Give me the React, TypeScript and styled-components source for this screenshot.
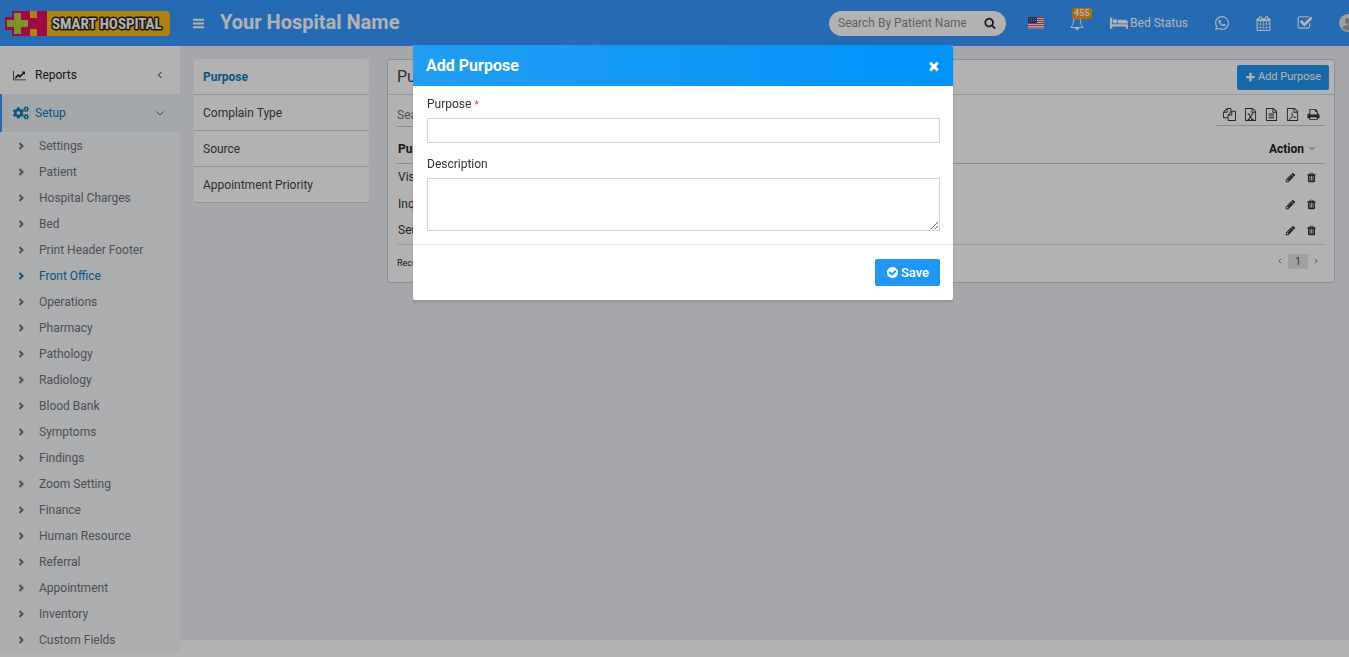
import React from "react";
import styled, { createGlobalStyle } from "styled-components";
import { FaCogs, FaWhatsapp } from "react-icons/fa";

const Global = createGlobalStyle`
  * { box-sizing: border-box; }
  body {
    margin: 0;
    background: #fff;
    color: #333;
    font-family: Roboto, "Liberation Sans", sans-serif;
    font-size: 12px;
    line-height: 18px;
  }
  a { color: inherit; text-decoration: none; }
  button, input, textarea { font: inherit; }
  ul { list-style: none; margin: 0; padding: 0; }
`;

const paths = {
  bars: "M1664 1344v128q0 26-19 45t-45 19h-1408q-26 0-45-19t-19-45v-128q0-26 19-45t45-19h1408q26 0 45 19t19 45zm0-512v128q0 26-19 45t-45 19h-1408q-26 0-45-19t-19-45v-128q0-26 19-45t45-19h1408q26 0 45 19t19 45zm0-512v128q0 26-19 45t-45 19h-1408q-26 0-45-19t-19-45v-128q0-26 19-45t45-19h1408q26 0 45 19t19 45z",
  search: "M1216 832q0-185-131.500-316.500t-316.500-131.500-316.500 131.500-131.500 316.500 131.500 316.500 316.500 131.500 316.500-131.500 131.500-316.500zm512 832q0 52-38 90t-90 38q-54 0-90-38l-343-342q-179 124-399 124-143 0-273.500-55.500t-225-150-150-225-55.500-273.500 55.500-273.500 150-225 225-150 273.500-55.500 273.500 55.500 225 150 150 225 55.500 273.500q0 220-124 399l343 343q37 37 37 90z",
  bell: "M912 1696q0-16-16-16-59 0-101.500-42.500t-42.500-101.500q0-16-16-16t-16 16q0 73 51.500 124.500t124.500 51.500q16 0 16-16zm-666-288h1300q-266-300-266-832 0-51-24-105t-69-103-121.500-80.500-169.500-31.500-169.500 31.500-121.500 80.500-69 103-24 105q0 532-266 832zm1482 0q0 52-38 90t-90 38h-448q0 106-75 181t-181 75-181-75-75-181h-448q-52 0-90-38t-38-90q50-42 91-88t85-119.500 74.500-158.500 50-206 19.500-260q0-152 117-282.500t307-158.500q-8-19-8-39 0-40 28-68t68-28 68 28 28 68q0 20-8 39 190 28 307 158.500t117 282.500q0 139 19.500 260t50 206 74.500 158.500 85 119.500 91 88z",
  trash: "M704 1376v-704q0-14-9-23t-23-9h-64q-14 0-23 9t-9 23v704q0 14 9 23t23 9h64q14 0 23-9t9-23zm256 0v-704q0-14-9-23t-23-9h-64q-14 0-23 9t-9 23v704q0 14 9 23t23 9h64q14 0 23-9t9-23zm256 0v-704q0-14-9-23t-23-9h-64q-14 0-23 9t-9 23v704q0 14 9 23t23 9h64q14 0 23-9t9-23zm-544-992h448l-48-117q-7-9-17-11h-317q-10 2-17 11zm928 32v64q0 14-9 23t-23 9h-96v948q0 83-47 143.500t-113 60.500h-832q-66 0-113-58.500t-47-141.500v-952h-96q-14 0-23-9t-9-23v-64q0-14 9-23t23-9h309l70-167q15-37 54-63t79-26h320q40 0 79 26t54 63l70 167h309q14 0 23 9t9 23z",
  pencil: "M491 1536l91-91-235-235-91 91v107h128v128h107zm523-928q0-22-22-22-10 0-17 7l-542 542q-7 7-7 17 0 22 22 22 10 0 17-7l542-542q7-7 7-17zm-54-192l416 416-832 832h-416v-416zm683 96q0 53-37 90l-166 166-416-416 166-165q36-38 90-38 53 0 91 38l235 234q37 39 37 91z",
  copy: "M1696 384q40 0 68 28t28 68v1216q0 40-28 68t-68 28h-960q-40 0-68-28t-28-68v-288h-544q-40 0-68-28t-28-68v-672q0-40 20-88t48-76l408-408q28-28 76-48t88-20h416q40 0 68 28t28 68v328q68-40 128-40h416zm-544 213l-299 299h299v-299zm-640-384l-299 299h299v-299zm196 647l316-316v-416h-384v416q0 40-28 68t-68 28h-416v640h512v-256q0-40 20-88t48-76zm956 804v-1152h-384v416q0 40-28 68t-68 28h-416v640h896z",
  file: "M1596 380q28 28 48 76t20 88v1152q0 40-28 68t-68 28h-1344q-40 0-68-28t-28-68v-1600q0-40 28-68t68-28h896q40 0 88 20t76 48zm-444-244v376h376q-10-29-22-41l-313-313q-12-12-41-22zm384 1528v-1024h-416q-40 0-68-28t-28-68v-416h-768v1536h1280z",
  lines: "M512 768h736v128h-736zM512 1024h736v128h-736zM512 1280h736v128h-736z",
  sheet: "M480 768h320v100h-70l170 250 170-250h-70v-100h300v100h-80l-250 340 260 350h90v100h-350v-100h80l-160-230-160 230h70v100h-320v-100h80l250-350-240-340h-70z",
  pdf: "M780 640q70-60 120 20 40 120 0 300 90 180 210 260 250-30 290 40 40 100-100 110-110-10-230-80-200 30-350 90-190 330-300 260-60-90 210-260 130-210 170-420-70-220-20-320zm70 400q-40 130-110 250 120-40 240-60-70-80-130-190z",
  print: "M448 1536h896v-256h-896v256zm0-640h896v-384h-160q-40 0-68-28t-28-68v-160h-640v640zm1152 64q0-26-19-45t-45-19-45 19-19 45 19 45 45 19 45-19 19-45zm128 0v416q0 13-9.500 22.500t-22.500 9.500h-224v160q0 40-28 68t-68 28h-960q-40 0-68-28t-28-68v-160h-224q-13 0-22.500-9.500t-9.500-22.500v-416q0-79 56.500-135.500t135.500-56.500h64v-544q0-40 28-68t68-28h672q40 0 88 20t76 48l152 152q28 28 48 76t20 88v256h64q79 0 135.500 56.500t56.500 135.500z",
  times: "M1490 1322q0 40-28 68l-136 136q-28 28-68 28t-68-28l-294-294-294 294q-28 28-68 28t-68-28l-136-136q-28-28-28-68t28-68l294-294-294-294q-28-28-28-68t28-68l136-136q28-28 68-28t68 28l294 294 294-294q28-28 68-28t68 28l136 136q28 28 28 68t-28 68l-294 294 294 294q28 28 28 68z",
  plus: "M1600 736v192q0 40-28 68t-68 28h-416v416q0 40-28 68t-68 28h-192q-40 0-68-28t-28-68v-416h-416q-40 0-68-28t-28-68v-192q0-40 28-68t68-28h416v-416q0-40 28-68t68-28h192q40 0 68 28t28 68v416h416q40 0 68 28t28 68z",
  checkCircle: "M1412 734q0-28-18-46l-91-90q-19-19-45-19t-45 19l-408 407-226-226q-19-19-45-19t-45 19l-91 90q-18 18-18 46 0 27 18 45l362 362q19 19 45 19 27 0 46-19l543-543q18-18 18-45zm252 162q0 209-103 385.500t-279.500 279.500-385.500 103-385.500-103-279.500-279.500-103-385.500 103-385.500 279.500-279.500 385.500-103 385.500 103 279.500 279.500 103 385.500z",
  checkSquare: "M1472 930v318q0 119-84.500 203.500t-203.500 84.500h-832q-119 0-203.500-84.500t-84.500-203.500v-832q0-119 84.500-203.500t203.500-84.500h832q63 0 117 25 15 7 18 23 3 17-9 29l-49 49q-10 10-23 10-3 0-9-2-23-6-45-6h-832q-66 0-113 47t-47 113v832q0 66 47 113t113 47h832q66 0 113-47t47-113v-254q0-13 9-22l64-64q10-10 23-10 6 0 12 3 20 8 20 29zm231-489l-814 814q-24 24-57 24t-57-24l-430-430q-24-24-24-57t24-57l110-110q24-24 57-24t57 24l263 263 647-647q24-24 57-24t57 24l110 110q24 24 24 57t-24 57z",
  bed: "M256 1024h1728q26 0 45 19t19 45v448h-256v-256h-1536v256h-256v-1216q0-26 19-45t45-19h128q26 0 45 19t19 45v704zm576-320q0-106-75-181t-181-75-181 75-75 181 75 181 181 75 181-75 75-181zm1216 256v-64q0-159-112.500-271.500t-271.500-112.500h-704q-26 0-45 19t-19 45v384h1152z",
  chart: "M2048 1536v128h-2048v-1536h128v1408h1920zm-128-1248v435q0 21-19.500 29.500t-35.500-7.500l-121-121-633 633q-10 10-23 10t-23-10l-233-233-416 416-192-192 585-585q10-10 23-10t23 10l233 233 464-464-121-121q-16-16-7.500-35.500t29.500-19.500h435q14 0 23 9t9 23z",
  calendar: "M192 1664h288v-288h-288v288zm352 0h320v-288h-320v288zm-352-352h288v-320h-288v320zm352 0h320v-320h-320v320zm-352-384h288v-288h-288v288zm736 736h320v-288h-320v288zm-384-736h320v-288h-320v288zm768 736h288v-288h-288v288zm-384-352h320v-320h-320v320zm-352-864v-288q0-13-9.500-22.500t-22.500-9.500h-64q-13 0-22.500 9.500t-9.500 22.500v288q0 13 9.500 22.500t22.500 9.500h64q13 0 22.500-9.500t9.500-22.500zm736 864h288v-320h-288v320zm-384-384h320v-288h-320v288zm384 0h288v-288h-288v288zm32-480v-288q0-13-9.500-22.500t-22.500-9.500h-64q-13 0-22.500 9.500t-9.500 22.500v288q0 13 9.500 22.500t22.500 9.500h64q13 0 22.500-9.500t9.500-22.500zm384-64v1280q0 52-38 90t-90 38h-1408q-52 0-90-38t-38-90v-1280q0-52 38-90t90-38h128v-96q0-66 47-113t113-47h64q66 0 113 47t47 113v96h384v-96q0-66 47-113t113-47h64q66 0 113 47t47 113v96h128q52 0 90 38t38 90z",
};

type IconName = keyof typeof paths;

const Svg = styled.svg`
  display: block;
  flex: none;
`;

function Icon({ name, size = 14, extra, wide }: { name: IconName; size?: number; extra?: IconName; wide?: boolean }) {
  const box = wide ? 2048 : 1792;
  return (
    <Svg width={wide ? Math.round((size * 8) / 7) : size} height={size} viewBox={`0 0 ${box} 1792`} fill="currentColor" aria-hidden>
      <path d={paths[name]} />
      {extra && <path d={paths[extra]} fillRule="evenodd" />}
    </Svg>
  );
}

function Chevron({ dir, size = 8, weight = 1 }: { dir: "left" | "right" | "down"; size?: number; weight?: number }) {
  const d = { left: "M5.500 1L2.500 4l3 3", right: "M2.500 1l3 3-3 3", down: "M.5 2.500l3.500 3.500 3.500-3.500" }[dir];
  return (
    <Svg width={size} height={size} viewBox="0 0 8 8" fill="none" stroke="currentColor" strokeWidth={weight} aria-hidden>
      <path d={d} />
    </Svg>
  );
}

const Page = styled.div`
  display: flex;
  flex-direction: column;
  min-height: 100vh;
`;

const Header = styled.header`
  display: flex;
  align-items: center;
  height: 46px;
  overflow: hidden;
  background: #3699ff;
  color: #fff;
`;

const Logo = styled.a`
  flex: none;
  width: 180px;
  padding-left: 5px;
`;

const MenuButton = styled.button`
  flex: none;
  padding: 0;
  margin: 0 15px 0 12px;
  border: 0;
  background: none;
  color: #fff;
`;

const HospitalName = styled.h1`
  flex: 1;
  margin: 0;
  font-size: 20px;
  line-height: 24px;
  font-weight: 700;
  padding-bottom: 3px;
  white-space: nowrap;
`;

const SearchPill = styled.form`
  display: flex;
  align-items: center;
  flex: none;
  width: 177px;
  height: 25px;
  margin-right: 22px;
  padding: 0 10px 0 9px;
  border-radius: 13px;
  background: #fff;
  color: #222;
  input {
    width: 128px;
    margin-right: 18px;
    padding: 0;
    border: 0;
    outline: 0;
    background: none;
  }
  input::placeholder { color: #8a8a8a; }
  button { padding: 0; border: 0; background: none; color: inherit; }
`;

const HeaderLinks = styled.nav`
  display: flex;
  align-items: center;
  flex: none;
  gap: 26px;
  margin-right: -8px;
`;

const HeaderLink = styled.a`
  position: relative;
  display: flex;
  align-items: center;
  gap: 2px;
`;

const Badge = styled.span`
  position: absolute;
  left: 2px;
  top: -8px;
  padding: 0 2px;
  border-radius: 2px;
  background: #f39c12;
  font-size: 9px;
  line-height: 11px;
  font-weight: 700;
`;

const Body = styled.div`
  display: flex;
  flex: 1;
`;

const Sidebar = styled.aside`
  flex: none;
  width: 180px;
  padding: 10px 0 5px;
  background: #fff;
`;

const MainItem = styled.a<{ $active?: boolean }>`
  display: flex;
  align-items: center;
  height: 38px;
  padding: 0 16px 0 11px;
  border-left: 2px solid ${(p) => (p.$active ? "#3699ff" : "transparent")};
  background: ${(p) => (p.$active ? "#ebeff3" : "#fff")};
  color: ${(p) => (p.$active ? "#0a7bb8" : "#222")};
  span { flex: 1; }
`;

const IconSlot = styled.i`
  display: flex;
  width: 22px;
`;

const SubMenu = styled.ul`
  background: #f6f8fa;
`;

const SubLink = styled.a<{ $active?: boolean }>`
  display: flex;
  align-items: center;
  gap: 14px;
  height: 26px;
  padding: 2px 0 0 17px;
  color: ${(p) => (p.$active ? "#0a7bb8" : "#6f737b")};
`;

const Right = styled.div`
  display: flex;
  flex-direction: column;
  flex: 1;
`;

const Content = styled.main`
  display: flex;
  align-items: flex-start;
  flex: 1;
  gap: 18px;
  padding: 13px 14px;
  background: #ecf0f5;
`;

const Footer = styled.footer`
  height: 17px;
  background: #fff;
`;

const TabList = styled.nav`
  flex: none;
  width: 175px;
  border-radius: 3px 3px 0 0;
  background: #fff;
`;

const Tab = styled.a<{ $active?: boolean }>`
  display: block;
  padding: 9px 9px 8px;
  border-bottom: 1px solid #d2d6da;
  color: ${(p) => (p.$active ? "#0a7bb8" : "#444")};
  font-weight: ${(p) => (p.$active ? 700 : 400)};
`;

const Panel = styled.section`
  flex: 1;
  padding-bottom: 7px;
  border: 1px solid #bfd0d8;
  border-radius: 3px;
  background: #fff;
`;

const PanelHeader = styled.div`
  display: flex;
  align-items: center;
  justify-content: space-between;
  height: 35px;
  padding: 0 5px 0 9px;
  border-bottom: 1px solid #cbdade;
  h2 { margin: 0; font-size: 16px; font-weight: 400; color: #444; }
`;

const PrimaryButton = styled.button<{ $tall?: boolean }>`
  display: flex;
  align-items: center;
  gap: 2px;
  height: ${(p) => (p.$tall ? 27 : 25)}px;
  padding: 0 ${(p) => (p.$tall ? 11 : 8)}px;
  border: 0;
  border-radius: 2px;
  background: #2196f3;
  color: #fff;
  font-size: ${(p) => (p.$tall ? 13 : 11)}px;
  font-weight: ${(p) => (p.$tall ? 500 : 400)};
  white-space: nowrap;
`;

const PanelBody = styled.div`
  padding: 7px 9px 0;
`;

const Tools = styled.div`
  display: flex;
  justify-content: space-between;
  input {
    width: 150px;
    height: 25px;
    padding: 2px 0 0;
    border: 0;
    border-bottom: 1px solid #ccc;
    outline: 0;
  }
`;

const ToolIcons = styled.div`
  display: flex;
  align-items: center;
  gap: 8px;
  height: 24px;
  padding: 2px 5px 0 7px;
  border-bottom: 1px solid #ccc;
  button { padding: 0; border: 0; background: none; color: #333; }
`;

const Table = styled.table`
  width: 100%;
  margin-top: 8px;
  border-collapse: collapse;
  border-bottom: 1px solid #e4e4e4;
  th { height: 28px; padding: 0 1px; font-weight: 700; text-align: left; color: #222; border-bottom: 1px solid #ccc; }
  td { height: 27px; padding: 0 1px; }
  th:last-child { text-align: right; padding-right: 9px; }
  td:last-child { padding-right: 8px; }
`;

const ActionHead = styled.span`
  display: inline-flex;
  align-items: center;
  gap: 4px;
`;

const Caret = styled.i`
  border: 4px solid transparent;
  border-top-color: #ccc;
  border-bottom: 0;
`;

const Actions = styled.div`
  display: flex;
  justify-content: flex-end;
  gap: 10px;
  padding-top: 1px;
  button { padding: 0; border: 0; background: none; color: #333; }
`;

const PanelFooter = styled.div`
  display: flex;
  align-items: flex-start;
  justify-content: space-between;
  padding: 9px 6px 3px 0;
  font-size: 9px;
  color: #222;
`;

const Pager = styled.div`
  display: flex;
  align-items: center;
  gap: 5px;
  color: #555;
  button { display: flex; padding: 0; border: 0; background: none; color: inherit; }
  b { width: 20px; background: #e6e6e6; font-size: 10px; line-height: 15px; font-weight: 400; text-align: center; }
`;

const Backdrop = styled.div`
  position: fixed;
  inset: 0;
  display: flex;
  justify-content: center;
  align-items: flex-start;
  padding: 45px 0 0 17px;
  background: rgba(0, 0, 0, 0.3);
`;

const Dialog = styled.form`
  width: 540px;
  border-radius: 2px;
  background: #fff;
  box-shadow: 0 2px 3px rgba(0, 0, 0, 0.125);
  overflow: hidden;
`;

const DialogHeader = styled.div`
  display: flex;
  align-items: center;
  justify-content: space-between;
  height: 41px;
  padding: 0 12px 0 13px;
  background: linear-gradient(to right, #219df3, #0093f9);
  color: #fff;
  h2 { margin: 0; font-size: 16px; font-weight: 700; }
  button { padding: 0; border: 0; background: none; color: inherit; }
`;

const DialogBody = styled.div`
  padding: 9px 13px 13px 14px;
  border-bottom: 1px solid #e5e5e5;
`;

const Field = styled.div`
  display: flex;
  flex-direction: column;
  gap: 5px;
  & + & { margin-top: 12px; }
  small { color: #ff3b3b; font-size: 10px; line-height: 10px; }
  input, textarea { display: block; width: 100%; border: 1px solid #d2d6de; border-radius: 0; outline: 0; background: #fff; }
  input { height: 25px; }
  textarea { height: 53px; resize: vertical; }
`;

const DialogFooter = styled.div`
  display: flex;
  justify-content: flex-end;
  padding: 14px 13px;
`;

const subItems = ["Settings", "Patient", "Hospital Charges", "Bed", "Print Header Footer", "Front Office", "Operations", "Pharmacy", "Pathology", "Radiology", "Blood Bank", "Symptoms", "Findings", "Zoom Setting", "Finance", "Human Resource", "Referral", "Appointment", "Inventory", "Custom Fields"];
const tabs = ["Purpose", "Complain Type", "Source", "Appointment Priority"];
const rows = ["Visit", "Inquiry", "Seminar"];
const exportTools: [string, IconName, IconName?][] = [["Copy", "copy"], ["Excel", "file", "sheet"], ["CSV", "file", "lines"], ["PDF", "file", "pdf"], ["Print", "print"]];

function LogoArt() {
  return (
    <Svg width="165" height="25" viewBox="0 0 165 25" role="img" aria-label="Smart Hospital">
      <rect x="20" width="145" height="25" rx="4" fill="#fcbb14" />
      <path d="M7 0h18v7h7V0h10v25H32v-7h-7v7H7v-6H0V6h7z" fill="#e60e64" />
      <path d="M9 2h7v7h7v7h-7v7H9v-7H2V9h7z" fill="#b0d43a" />
      <path d="M25 0h7v7h-7zM25 18h7v7h-7z" fill="#fcbb14" />
      <text x="47" y="18" fontFamily="'Liberation Sans Narrow', 'Roboto Condensed', 'Liberation Sans', sans-serif" fontSize="15" fontWeight="700" fill="#fff" stroke="#2a2210" strokeWidth="3" strokeLinejoin="round" paintOrder="stroke">SMART HOSPITAL</text>
    </Svg>
  );
}

function Flag() {
  return (
    <Svg width="16" height="12" viewBox="0 0 16 12" role="img" aria-label="English">
      <rect width="16" height="12" fill="#f3e9ee" />
      <path d="M0 .5h16M0 2.500h16M0 4.500h16M0 6.500h16M0 8.500h16M0 11h16" stroke="#d0506a" />
      <rect width="9" height="6" fill="#33437f" />
      <path d="M1 1.500h7M1 3.500h7" stroke="#8d9bc9" strokeDasharray="1 1" />
    </Svg>
  );
}

function Avatar() {
  return (
    <Svg width="18" height="18" viewBox="0 0 18 18" role="img" aria-label="Account">
      <circle cx="9" cy="9" r="9" fill="#e4e4e4" />
      <circle cx="9" cy="7" r="3" fill="#a5a5a5" />
      <path d="M3 14q6-7 12 0-6 5-12 0z" fill="#a5a5a5" />
    </Svg>
  );
}

export default function App() {
  return (
    <>
      <Global />
      <Page>
        <Header>
          <Logo href="#"><LogoArt /></Logo>
          <MenuButton aria-label="Toggle menu"><Icon name="bars" size={13} /></MenuButton>
          <HospitalName>Your Hospital Name</HospitalName>
          <SearchPill>
            <input aria-label="Search patients" placeholder="Search By Patient Name" />
            <button type="button" aria-label="Search"><Icon name="search" size={12} /></button>
          </SearchPill>
          <HeaderLinks>
            <HeaderLink href="#"><Flag /></HeaderLink>
            <HeaderLink href="#" aria-label="Notifications"><Icon name="bell" size={14} /><Badge>455</Badge></HeaderLink>
            <HeaderLink href="#"><Icon name="bed" size={16} wide />Bed Status</HeaderLink>
            <HeaderLink href="#" aria-label="WhatsApp"><FaWhatsapp size={16} /></HeaderLink>
            <HeaderLink href="#" aria-label="Calendar"><Icon name="calendar" size={15} /></HeaderLink>
            <HeaderLink href="#" aria-label="Tasks"><Icon name="checkSquare" size={16} /></HeaderLink>
            <HeaderLink href="#"><Avatar /></HeaderLink>
          </HeaderLinks>
        </Header>
        <Body>
          <Sidebar>
            <MainItem href="#"><IconSlot><Icon name="chart" size={11} wide /></IconSlot><span>Reports</span><Chevron dir="left" /></MainItem>
            <MainItem href="#" $active><IconSlot><FaCogs size={16} /></IconSlot><span>Setup</span><Chevron dir="down" /></MainItem>
            <SubMenu>
              {subItems.map((t) => (
                <li key={t}><SubLink href="#" $active={t === "Front Office"}><Chevron dir="right" weight={2} />{t}</SubLink></li>
              ))}
            </SubMenu>
          </Sidebar>
          <Right>
            <Content>
              <TabList>{tabs.map((t, i) => <Tab key={t} href="#" $active={i === 0}>{t}</Tab>)}</TabList>
              <Panel>
                <PanelHeader>
                  <h2>Purpose List</h2>
                  <PrimaryButton><Icon name="plus" size={11} />Add Purpose</PrimaryButton>
                </PanelHeader>
                <PanelBody>
                  <Tools>
                    <input aria-label="Search" placeholder="Search..." />
                    <ToolIcons>
                      {exportTools.map(([label, icon, extra]) => <button key={label} aria-label={label}><Icon name={icon} size={13} extra={extra} /></button>)}
                    </ToolIcons>
                  </Tools>
                  <Table>
                    <thead><tr><th>Purpose</th><th><ActionHead>Action<Caret /></ActionHead></th></tr></thead>
                    <tbody>
                      {rows.map((r) => (
                        <tr key={r}>
                          <td>{r}</td>
                          <td><Actions><button aria-label={`Edit ${r}`}><Icon name="pencil" size={11} /></button><button aria-label={`Delete ${r}`}><Icon name="trash" size={11} /></button></Actions></td>
                        </tr>
                      ))}
                    </tbody>
                  </Table>
                  <PanelFooter>
                    <span>Records: 1 to 3 of 3</span>
                    <Pager>
                      <button aria-label="Previous page"><Chevron dir="left" size={6} /></button>
                      <b>1</b>
                      <button aria-label="Next page"><Chevron dir="right" size={6} /></button>
                    </Pager>
                  </PanelFooter>
                </PanelBody>
              </Panel>
            </Content>
            <Footer />
          </Right>
        </Body>
      </Page>
      <Backdrop>
        <Dialog role="dialog" aria-labelledby="dialog-title">
          <DialogHeader>
            <h2 id="dialog-title">Add Purpose</h2>
            <button type="button" aria-label="Close"><Icon name="times" size={14} /></button>
          </DialogHeader>
          <DialogBody>
            <Field><label htmlFor="purpose">Purpose <small>*</small></label><input id="purpose" /></Field>
            <Field><label htmlFor="description">Description</label><textarea id="description" /></Field>
          </DialogBody>
          <DialogFooter><PrimaryButton type="button" $tall><Icon name="checkCircle" size={13} />Save</PrimaryButton></DialogFooter>
        </Dialog>
      </Backdrop>
    </>
  );
}
